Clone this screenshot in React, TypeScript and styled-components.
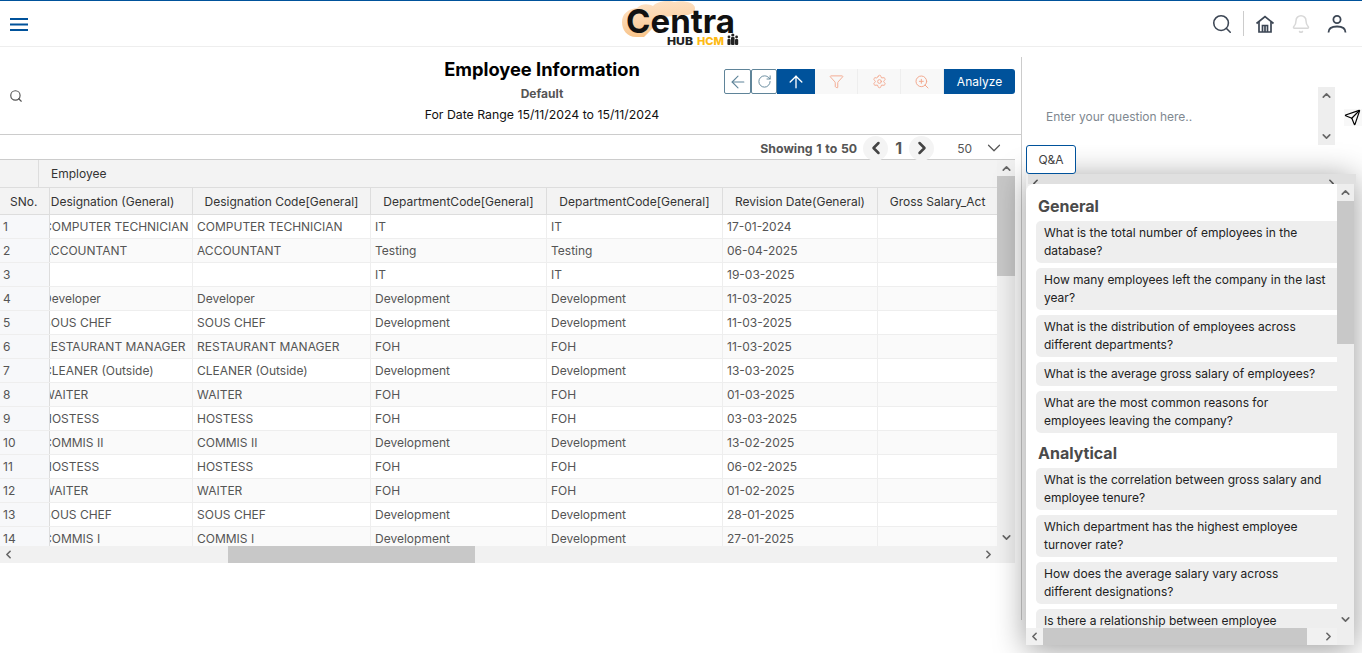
import styled, { createGlobalStyle } from 'styled-components';
import {
    ArrowLeft,
    ArrowUp,
    Bell,
    ChevronDown,
    ChevronLeft,
    ChevronRight,
    ChevronUp,
    Filter,
    RotateCw,
    Search,
    Send,
    Settings,
    ZoomIn,
} from 'lucide-react';

const BLUE = '#00529b';

const GlobalStyle = createGlobalStyle`
    html, body {
        margin: 0;
        padding: 0;
        background: #fff;
        font-family: Inter, "Liberation Sans", sans-serif;
    }
    * {
        box-sizing: border-box;
    }
`;

const Page = styled.div`
    width: 1362px;
    height: 653px;
    overflow: hidden;
    display: flex;
    flex-direction: column;
`;

const TopBar = styled.header`
    height: 47px;
    flex-shrink: 0;
    border-top: 1px solid ${BLUE};
    border-bottom: 1px solid #eee;
    display: grid;
    grid-template-columns: 1fr auto 1fr;
    align-items: center;
    padding: 0 15px;
`;

const MenuButton = styled.div`
    margin-left: -5px;
    display: flex;
`;

const TopIcons = styled.div`
    display: flex;
    align-items: center;
    justify-content: flex-end;
    gap: 16px;
`;

const TopDivider = styled.div`
    width: 1px;
    height: 25px;
    background: #ccc;
    margin: 0 -5px 0 -6px;
`;

const Body = styled.div`
    flex: 1;
    display: flex;
    min-height: 0;
`;

const LeftPanel = styled.main`
    width: 1021px;
    flex-shrink: 0;
`;

const ReportHead = styled.div`
    height: 88px;
    border-bottom: 1px solid #ccc;
    display: grid;
    grid-template-columns: 380px 324px 1fr;
`;

const HeadSearch = styled.div`
    color: #555;
    padding: 40px 0 0 9px;
`;

const TitleBlock = styled.div`
    padding-top: 11px;
    text-align: center;
`;

const Title = styled.h1`
    margin: 0;
    font-size: 18.3px;
    font-weight: 700;
    line-height: 22px;
    color: #000;
`;

const Subtitle = styled.div`
    margin-top: 3px;
    font-size: 12px;
    font-weight: 700;
    line-height: 21px;
    color: #555;
`;

const DateRange = styled.div`
    font-size: 12.3px;
    line-height: 21px;
    color: #111;
`;

const Toolbar = styled.div`
    display: flex;
    justify-content: flex-end;
    align-items: flex-start;
    padding: 22px 6px 0 0;
`;

const OutlineButton = styled.div<{ $width: number }>`
    width: ${(p) => p.$width}px;
    height: 25px;
    border: 1px solid #5f8499;
    border-radius: 2px;
    color: #5f8499;
    display: flex;
    align-items: center;
    justify-content: center;
`;

const ActiveButton = styled.div`
    width: 38px;
    height: 25px;
    background: ${BLUE};
    color: #fff;
    display: flex;
    align-items: center;
    justify-content: center;
`;

const MutedButton = styled.div`
    width: 43px;
    height: 25px;
    background: #f8f8f8;
    border-right: 1px solid #eee;
    color: #f3a98f;
    display: flex;
    align-items: center;
    justify-content: center;
`;

const AnalyzeButton = styled.div`
    width: 71px;
    height: 25px;
    background: ${BLUE};
    border-radius: 0 3px 3px 0;
    color: #fff;
    font-size: 12px;
    display: flex;
    align-items: center;
    justify-content: center;
`;

const Pager = styled.div`
    height: 24px;
    padding: 2px 16px 0 0;
    display: flex;
    align-items: center;
    justify-content: flex-end;
    color: #555;
`;

const PagerText = styled.span`
    font-size: 12.3px;
    word-spacing: 0.8px;
    font-weight: 700;
    margin-right: 6px;
`;

const PagerStep = styled.div`
    width: 25px;
    height: 25px;
    border-radius: 50%;
    background: #f4f4f4;
    color: #444;
    display: flex;
    align-items: center;
    justify-content: center;
`;

const PagerNumber = styled.span`
    width: 21px;
    text-align: center;
    font-size: 16px;
    font-weight: 700;
`;

const PageSize = styled.span`
    font-size: 12px;
    margin: 0 11px 0 23px;
`;

const GridFrame = styled.div`
    width: 1015px;
    height: 404px;
    border-top: 1px solid #ccc;
    display: grid;
    grid-template-columns: 997px 18px;
    grid-template-rows: 386px 17px;
`;

const GridTable = styled.div`
    overflow: hidden;
    font-size: 12px;
`;

const GroupRow = styled.div`
    height: 28px;
    background: #f3f3f3;
    border-bottom: 1px solid #ddd;
    display: flex;
    color: #333;
`;

const GroupSpacer = styled.div`
    width: 39px;
    border-right: 1px solid #ddd;
`;

const GroupLabel = styled.div`
    padding-left: 12px;
    line-height: 27px;
`;

const Row = styled.div<{ $kind: 'head' | 'odd' | 'even' }>`
    height: ${(p) => (p.$kind === 'head' ? 27 : 24)}px;
    display: flex;
    border-bottom: 1px solid ${(p) => (p.$kind === 'head' ? '#ddd' : '#eee')};
    background: ${(p) => (p.$kind === 'head' ? '#f3f3f3' : p.$kind === 'even' ? '#fafafa' : '#fff')};
    color: ${(p) => (p.$kind === 'head' ? '#333' : '#555')};
`;

const SnoCell = styled.div<{ $head?: boolean }>`
    width: 50px;
    flex-shrink: 0;
    border-right: 1px solid #ddd;
    background: ${(p) => (p.$head ? '#f3f3f3' : '#f7f8fa')};
    padding-left: ${(p) => (p.$head ? 10 : 3)}px;
    line-height: ${(p) => (p.$head ? 27 : 23)}px;
`;

const Scrolled = styled.div`
    flex: 1;
    min-width: 0;
    overflow: hidden;
`;

const Track = styled.div`
    display: flex;
    margin-left: -11px;
`;

const Cell = styled.div<{ $width: number; $head?: boolean; $shift?: number; $open?: boolean }>`
    width: ${(p) => p.$width}px;
    flex-shrink: 0;
    border-right: 1px solid ${(p) => (p.$open ? 'transparent' : p.$head ? '#ddd' : '#eee')};
    padding: 0 ${(p) => (p.$shift ? p.$shift + 4 : 4)}px 0 4px;
    text-align: ${(p) => (p.$head ? 'center' : 'left')};
    line-height: ${(p) => (p.$head ? 27 : 23)}px;
    height: 26px;
    white-space: nowrap;
    overflow: hidden;
`;

const VScroll = styled.div<{ $light?: boolean }>`
    background: ${(p) => (p.$light ? '#eee' : '#f1f1f1')};
    display: flex;
    flex-direction: column;
    color: #666;
    width: 100%;
    height: 100%;
`;

const HScroll = styled.div`
    background: #f1f1f1;
    display: flex;
    align-items: center;
    color: #666;
    height: 100%;
`;

const ScrollCorner = styled.div`
    background: #f1f1f1;
`;

const ScrollArrow = styled.div`
    width: 100%;
    height: 17px;
    flex-shrink: 0;
    display: flex;
    align-items: center;
    justify-content: center;
`;

const GridTopArrow = styled(ScrollArrow)`
    height: 16px;
`;

const HArrow = styled(ScrollArrow)`
    width: 17px;
`;

const VTrack = styled.div`
    flex: 1;
`;

const VThumb = styled.div<{ $size: number }>`
    height: ${(p) => p.$size}px;
    background: #c8c8c8;
`;

const HTrack = styled.div`
    flex: 1;
    height: 100%;
`;

const HThumb = styled.div<{ $offset: number; $size: number }>`
    margin-left: ${(p) => p.$offset}px;
    width: ${(p) => p.$size}px;
    height: 100%;
    background: #c8c8c8;
`;

const RightPanel = styled.aside`
    flex: 1;
    min-width: 0;
    margin-top: 10px;
    height: 563px;
    border-left: 1px solid #ccc;
`;

const AskRow = styled.div`
    height: 88px;
    display: flex;
`;

const AskInput = styled.textarea`
    width: 272px;
    height: 58px;
    margin: 30px 0 0 24px;
    padding: 21px 0 0;
    border: 0;
    outline: 0;
    resize: none;
    overflow: hidden;
    font: 12px/18px Inter, "Liberation Sans", sans-serif;
    &::placeholder {
        color: #808890;
    }
`;

const AskScroll = styled.div`
    width: 17px;
    height: 58px;
    margin-top: 30px;
`;

const SendButton = styled.div`
    margin: 52px 0 0 9px;
    width: 18px;
    height: 17px;
    color: #000;
    background: #f8f8f8;
`;

const TabButton = styled.div`
    position: relative;
    z-index: 2;
    width: 50px;
    height: 29px;
    margin-left: 4px;
    border: 1px solid ${BLUE};
    border-radius: 3px;
    background: #fff;
    color: #444;
    font-size: 12px;
    display: flex;
    align-items: center;
    justify-content: center;
`;

const QaPanel = styled.section`
    width: 328px;
    height: 471px;
    margin-left: 4px;
    box-shadow: 0 4px 30px rgba(0, 0, 0, 0.4);
    display: flex;
    flex-direction: column;
    background: #eee;
`;

const QaTopStrip = styled.div`
    height: 10px;
    margin: 0 -2px 0 2px;
    background: #e0e0e0;
    color: #555;
    display: flex;
    justify-content: space-between;
    overflow: hidden;
    padding: 3px 18px 0 1px;
`;

const QaMiddle = styled.div`
    height: 444px;
    display: flex;
`;

const QaContent = styled.div`
    width: 311px;
    overflow: hidden;
    background: #fff;
    border-radius: 8px 0 0 0;
    padding-left: 10px;
`;

const QaScroll = styled.div`
    width: 17px;
`;

const QaBottom = styled.div`
    height: 17px;
    width: 311px;
`;

const GroupTitle = styled.h2<{ $first?: boolean }>`
    margin: 0;
    padding: ${(p) => (p.$first ? '12px' : '5px')} 0 4px 2px;
    font-size: 16px;
    font-weight: 700;
    line-height: 21px;
    color: #4a4a4a;
`;

const Question = styled.div`
    width: 310px;
    margin-bottom: 5px;
    padding: 3px 17px 3px 8px;
    background: #eee;
    border-radius: 5px;
    font-size: 12px;
    line-height: 18px;
    color: #222;
`;

const columns = [154, 178, 176, 176, 155, 120];

const headers = [
    'Designation (General)',
    'Designation Code[General]',
    'DepartmentCode[General]',
    'DepartmentCode[General]',
    'Revision Date(General)',
    'Gross Salary_Act',
];

const rows = [
    ['COMPUTER TECHNICIAN', 'IT', '17-01-2024'],
    ['ACCOUNTANT', 'Testing', '06-04-2025'],
    ['', 'IT', '19-03-2025'],
    ['Developer', 'Development', '11-03-2025'],
    ['SOUS CHEF', 'Development', '11-03-2025'],
    ['RESTAURANT MANAGER', 'FOH', '11-03-2025'],
    ['CLEANER (Outside)', 'Development', '13-03-2025'],
    ['WAITER', 'FOH', '01-03-2025'],
    ['HOSTESS', 'FOH', '03-03-2025'],
    ['COMMIS II', 'Development', '13-02-2025'],
    ['HOSTESS', 'FOH', '06-02-2025'],
    ['WAITER', 'FOH', '01-02-2025'],
    ['SOUS CHEF', 'Development', '28-01-2025'],
    ['COMMIS I', 'Development', '27-01-2025'],
];

const generalQuestions = [
    'What is the total number of employees in the database?',
    'How many employees left the company in the last year?',
    'What is the distribution of employees across different departments?',
    'What is the average gross salary of employees?',
    'What are the most common reasons for employees leaving the company?',
];

const analyticalQuestions = [
    'What is the correlation between gross salary and employee tenure?',
    'Which department has the highest employee turnover rate?',
    'How does the average salary vary across different designations?',
    'Is there a relationship between employee satisfaction and retention?',
];

function Logo() {
    return (
        <svg width="118" height="45" viewBox="0 0 118 45" aria-label="Centra HUB HCM">
            <defs>
                <linearGradient id="cloud" x1="0" y1="0" x2="0.2" y2="1">
                    <stop offset="0" stopColor="#fde3c8" />
                    <stop offset="0.5" stopColor="#fcd7b0" />
                    <stop offset="1" stopColor="#f8c48a" />
                </linearGradient>
            </defs>
            <path
                d="M14 36 C5 36 0 29 0 21 C0 13 6 8 15 7 C20 2 27 3 31 5 C35 0 47 -1 52 1 C62 -1 73 2 73 7 C73 11 70 13 66 14 L40 16 L28 30 L22 36 Z"
                fill="url(#cloud)"
            />
            <text
                x="4"
                y="32"
                fontFamily="Inter, sans-serif"
                fontSize="33"
                fontWeight="700"
                fill="#111"
                textLength="109"
                lengthAdjust="spacingAndGlyphs"
            >
                Centra
            </text>
            <text x="45" y="44" fontFamily="Inter, sans-serif" fontSize="11" fontWeight="800" fill="#222" textLength="26" lengthAdjust="spacingAndGlyphs">
                HUB
            </text>
            <text x="75" y="44" fontFamily="Inter, sans-serif" fontSize="11" fontWeight="800" fill="#fdb913" textLength="27" lengthAdjust="spacingAndGlyphs">
                HCM
            </text>
            <g fill="#222">
                <circle cx="107" cy="36" r="1.4" />
                <rect x="105.4" y="38" width="3.2" height="6" rx="1" />
                <circle cx="110.8" cy="34" r="1.6" />
                <rect x="109" y="36" width="3.6" height="8" rx="1" />
                <circle cx="114.6" cy="36" r="1.4" />
                <rect x="113" y="38" width="3.2" height="6" rx="1" />
            </g>
        </svg>
    );
}

function MenuIcon() {
    return (
        <svg width="18" height="14" viewBox="0 0 18 14" fill="none" stroke={BLUE} strokeWidth="2">
            <path d="M0 2H18M0 7.5H18M0 13H18" />
        </svg>
    );
}

function HomeIcon() {
    return (
        <svg width="20" height="20" viewBox="0 0 20 20" fill="none" stroke="#3c4654" strokeWidth="1.7">
            <path d="M1.5 9.5L10 2.5L18.5 9.5" />
            <path d="M4 8V18H16V8" />
            <path d="M7.5 18V11.5H12.5V18" />
            <path d="M10 11.5V18" />
        </svg>
    );
}

function UserIcon() {
    return (
        <svg width="20" height="20" viewBox="0 0 20 20" fill="none" stroke="#3c4654" strokeWidth="1.8">
            <circle cx="10" cy="5.5" r="3.6" />
            <path d="M1.5 18.5C1.5 14.5 5 12.5 10 12.5C15 12.5 18.5 14.5 18.5 18.5" />
        </svg>
    );
}

export default function App() {
    return (
        <Page>
            <GlobalStyle />
            <TopBar>
                <MenuButton>
                    <MenuIcon />
                </MenuButton>
                <Logo />
                <TopIcons>
                    <Search size={22} color="#3c4654" strokeWidth={1.7} />
                    <TopDivider />
                    <HomeIcon />
                    <Bell size={20} color="#d8d8d8" strokeWidth={1.8} />
                    <UserIcon />
                </TopIcons>
            </TopBar>
            <Body>
                <LeftPanel>
                    <ReportHead>
                        <HeadSearch>
                            <Search size={14} />
                        </HeadSearch>
                        <TitleBlock>
                            <Title>Employee Information</Title>
                            <Subtitle>Default</Subtitle>
                            <DateRange>For Date Range 15/11/2024 to 15/11/2024</DateRange>
                        </TitleBlock>
                        <Toolbar>
                            <OutlineButton $width={27}>
                                <ArrowLeft size={20} strokeWidth={1.3} />
                            </OutlineButton>
                            <OutlineButton $width={26}>
                                <RotateCw size={15} strokeWidth={1.5} />
                            </OutlineButton>
                            <ActiveButton>
                                <ArrowUp size={20} strokeWidth={1.6} />
                            </ActiveButton>
                            <MutedButton>
                                <Filter size={15} strokeWidth={1.5} />
                            </MutedButton>
                            <MutedButton>
                                <Settings size={15} strokeWidth={1.5} />
                            </MutedButton>
                            <MutedButton>
                                <ZoomIn size={16} strokeWidth={1.5} />
                            </MutedButton>
                            <AnalyzeButton>Analyze</AnalyzeButton>
                        </Toolbar>
                    </ReportHead>
                    <Pager>
                        <PagerText>Showing 1 to 50</PagerText>
                        <PagerStep>
                            <ChevronLeft size={20} strokeWidth={3} />
                        </PagerStep>
                        <PagerNumber>1</PagerNumber>
                        <PagerStep>
                            <ChevronRight size={20} strokeWidth={3} />
                        </PagerStep>
                        <PageSize>50</PageSize>
                        <ChevronDown size={22} strokeWidth={1.3} />
                    </Pager>
                    <GridFrame>
                        <GridTable>
                            <GroupRow>
                                <GroupSpacer />
                                <GroupLabel>Employee</GroupLabel>
                            </GroupRow>
                            <Row $kind="head">
                                <SnoCell $head>SNo.</SnoCell>
                                <Scrolled>
                                    <Track>
                                        {headers.map((label, i) => (
                                            <Cell key={i} $head $open={i === 5} $width={columns[i]} $shift={i === 0 ? 6 : 0}>
                                                {label}
                                            </Cell>
                                        ))}
                                    </Track>
                                </Scrolled>
                            </Row>
                            {rows.map(([designation, department, date], i) => (
                                <Row key={i} $kind={i % 2 === 0 ? 'odd' : 'even'}>
                                    <SnoCell>{i + 1}</SnoCell>
                                    <Scrolled>
                                        <Track>
                                            <Cell $width={columns[0]}>{designation}</Cell>
                                            <Cell $width={columns[1]}>{designation}</Cell>
                                            <Cell $width={columns[2]}>{department}</Cell>
                                            <Cell $width={columns[3]}>{department}</Cell>
                                            <Cell $width={columns[4]}>{date}</Cell>
                                            <Cell $open $width={columns[5]} />
                                        </Track>
                                    </Scrolled>
                                </Row>
                            ))}
                        </GridTable>
                        <VScroll>
                            <GridTopArrow>
                                <ChevronUp size={13} strokeWidth={3} />
                            </GridTopArrow>
                            <VThumb $size={100} />
                            <VTrack />
                            <ScrollArrow>
                                <ChevronDown size={13} strokeWidth={3} />
                            </ScrollArrow>
                        </VScroll>
                        <HScroll>
                            <HArrow>
                                <ChevronLeft size={13} strokeWidth={3} />
                            </HArrow>
                            <HTrack>
                                <HThumb $offset={211} $size={247} />
                            </HTrack>
                            <HArrow>
                                <ChevronRight size={13} strokeWidth={3} />
                            </HArrow>
                        </HScroll>
                        <ScrollCorner />
                    </GridFrame>
                </LeftPanel>
                <RightPanel>
                    <AskRow>
                        <AskInput placeholder="Enter your question here.." />
                        <AskScroll>
                            <VScroll $light>
                                <ScrollArrow>
                                    <ChevronUp size={13} strokeWidth={3} />
                                </ScrollArrow>
                                <VTrack />
                                <ScrollArrow>
                                    <ChevronDown size={13} strokeWidth={3} />
                                </ScrollArrow>
                            </VScroll>
                        </AskScroll>
                        <SendButton>
                            <Send size={17} strokeWidth={1.7} />
                        </SendButton>
                    </AskRow>
                    <TabButton>Q&amp;A</TabButton>
                    <QaPanel>
                        <QaTopStrip>
                            <ChevronLeft size={13} strokeWidth={3} />
                            <ChevronRight size={13} strokeWidth={3} />
                        </QaTopStrip>
                        <QaMiddle>
                            <QaContent>
                                <GroupTitle $first>General</GroupTitle>
                                {generalQuestions.map((q) => (
                                    <Question key={q}>{q}</Question>
                                ))}
                                <GroupTitle>Analytical</GroupTitle>
                                {analyticalQuestions.map((q) => (
                                    <Question key={q}>{q}</Question>
                                ))}
                            </QaContent>
                            <QaScroll>
                                <VScroll $light>
                                    <ScrollArrow>
                                        <ChevronUp size={13} strokeWidth={3} />
                                    </ScrollArrow>
                                    <VThumb $size={143} />
                                    <VTrack />
                                    <ScrollArrow>
                                        <ChevronDown size={13} strokeWidth={3} />
                                    </ScrollArrow>
                                </VScroll>
                            </QaScroll>
                        </QaMiddle>
                        <QaBottom>
                            <HScroll>
                                <HArrow>
                                    <ChevronLeft size={13} strokeWidth={3} />
                                </HArrow>
                                <HTrack>
                                    <HThumb $offset={0} $size={264} />
                                </HTrack>
                                <HArrow>
                                    <ChevronRight size={13} strokeWidth={3} />
                                </HArrow>
                            </HScroll>
                        </QaBottom>
                    </QaPanel>
                </RightPanel>
            </Body>
        </Page>
    );
}
